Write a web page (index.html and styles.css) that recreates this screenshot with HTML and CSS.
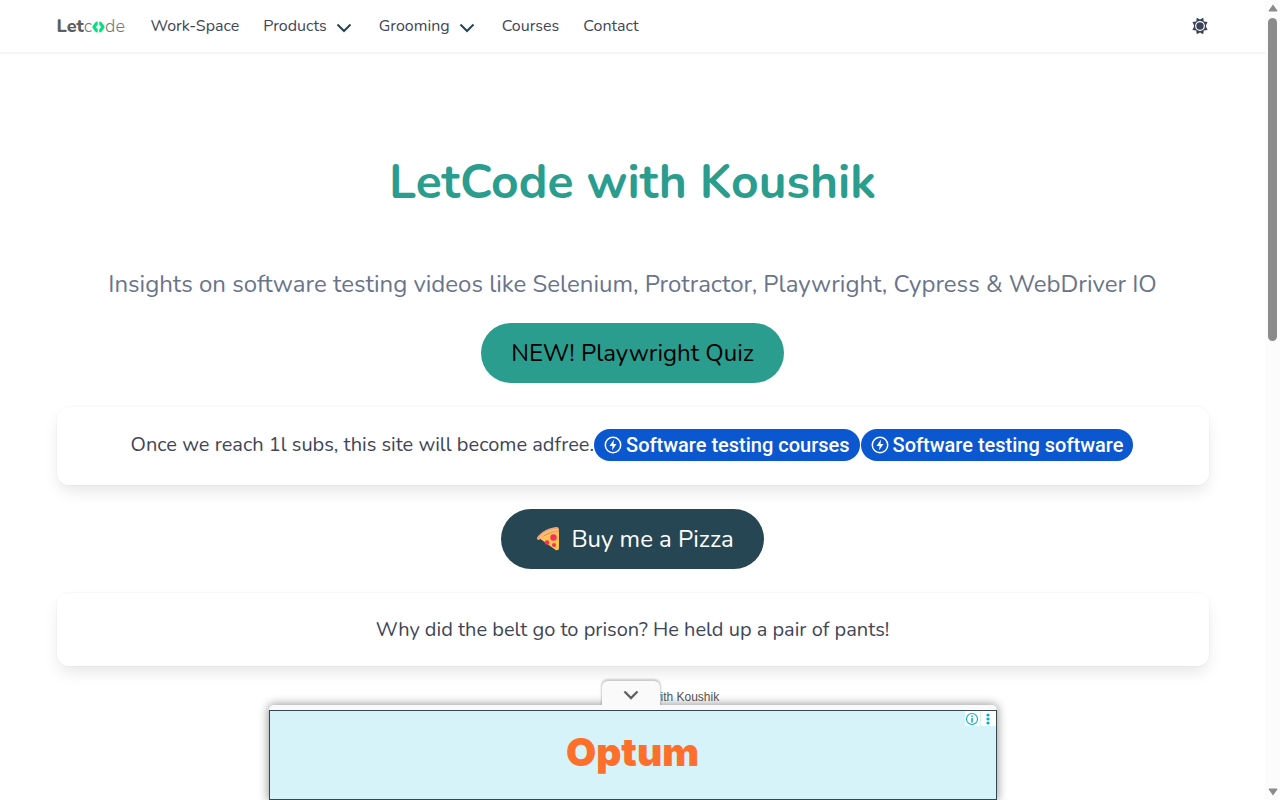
FILE: index.html
```html
<!DOCTYPE html>
<html lang="en">
<head>
<meta charset="utf-8">
<title>LetCode with Koushik</title>
<link rel="stylesheet" href="styles.css">
</head>
<body>
<div class="page">
  <header class="navbar">
    <nav class="navbar-inner" aria-label="Main">
      <a class="logo" href="#" aria-label="Letcode"><b>Let</b>c<svg width="13" height="12" viewBox="0 0 13 12" aria-hidden="true"><path d="M5.800.5v3L4 6l1.800 2.500v3C3.500 11.500 2 9.500.2 6 2 2.500 3.500.5 5.800.5zM7.200.5v3L9 6 7.200 8.500v3c2.300 0 3.800-2 5.600-5.500C11 2.500 9.500.5 7.200.5z" fill="#08df82"/></svg>de</a>
      <a class="nav-link" href="#">Work-Space</a>
      <a class="nav-link" href="#">Products<svg class="chevron" viewBox="0 0 16 10" aria-hidden="true"><path d="M1.500 1.500 8 8l6.500-6.500"/></svg></a>
      <a class="nav-link" href="#">Grooming<svg class="chevron" viewBox="0 0 16 10" aria-hidden="true"><path d="M1.500 1.500 8 8l6.500-6.500"/></svg></a>
      <a class="nav-link" href="#">Courses</a>
      <a class="nav-link" href="#">Contact</a>
      <button class="theme" type="button" aria-label="Toggle theme"><svg width="18" height="18" viewBox="0 0 18 18" aria-hidden="true"><path d="M9 2.500 12.200.800l.6 3.600 3.800.5L15 8.200V9.800l1.600 3.300-3.800.5-.6 3.600L9 15.500l-3.200 1.700-.6-3.600-3.800-.5L3 9.800V8.200L1.400 4.900l3.800-.5.6-3.600z" fill="#3b4256"/><circle cx="9" cy="9" r="4.300" fill="#3b4256" stroke="#fff" stroke-width="1.200"/></svg></button>
    </nav>
  </header>
  <main class="content">
    <h1>LetCode with Koushik</h1>
    <p class="subtitle">Insights on software testing videos like Selenium, Protractor, Playwright, Cypress &amp; WebDriver IO</p>
    <a class="pill pill-quiz" href="#">NEW! Playwright Quiz</a>
    <section class="card card-ads">
      <span>Once we reach 1l subs, this site will become adfree.</span>
      <a class="chip" href="#"><svg viewBox="0 0 18 18" aria-hidden="true"><circle cx="9" cy="9" r="7.700" fill="none" stroke="#fff" stroke-width="1.500"/><path d="M10 3.500 5.500 10h3L8 14.500 12.500 8h-3z" fill="#fff"/></svg>Software testing courses</a>
      <a class="chip" href="#"><svg viewBox="0 0 18 18" aria-hidden="true"><circle cx="9" cy="9" r="7.700" fill="none" stroke="#fff" stroke-width="1.500"/><path d="M10 3.500 5.500 10h3L8 14.500 12.500 8h-3z" fill="#fff"/></svg>Software testing software</a>
    </section>
    <a class="pill pill-pizza" href="#"><svg width="24" height="26" viewBox="0 0 24 26" aria-hidden="true"><path d="M3 12 20 4.500Q23 4.500 23 7v15q0 3-3 2.200z" fill="#ffc44d"/><path d="M1 13C-.5 11 9 2 20 1q3-.3 3 3v2C14 6 8 9 3 14q-1 .3-2-1z" fill="#f2a56f"/><path d="M4 11.500C9 6 15 4 22 3.500" fill="none" stroke="#ffc08a" stroke-width="1.500"/><circle cx="17.500" cy="11.500" r="3.200" fill="#f92f60"/><circle cx="11" cy="16.500" r="2.300" fill="#f92f60"/><circle cx="18" cy="19" r="2" fill="#f92f60"/></svg>Buy me a Pizza</a>
    <section class="card">Why did the belt go to prison? He held up a pair of pants!</section>
    <p class="caption">with Koushik</p>
  </main>
</div>
<div class="scrollbar" aria-hidden="true">
  <svg width="10" height="8" viewBox="0 0 10 8"><path d="M5 .5 9.300 6.500Q9.500 7.500 8.500 7.500h-7Q.5 7.500.7 6.500z"/></svg>
  <div class="track"><div class="thumb"></div></div>
  <svg width="10" height="8" viewBox="0 0 10 8"><path d="M5 7.500.7 1.500Q.5.500 1.500.500h7q1 0 .8 1z"/></svg>
</div>
<aside class="anchor-ad">
  <button class="collapse" type="button" aria-label="Hide advertisement"><svg width="16" height="10" viewBox="0 0 16 10" aria-hidden="true"><path d="M1.500 1.500 8 8l6.500-6.500" fill="none" stroke="#616161" stroke-width="2.400"/></svg></button>
  <div class="ad-frame">
    <a class="banner" href="#">Optum</a>
    <div class="ad-options">
      <button type="button" aria-label="Ad information"><svg width="14" height="14" viewBox="0 0 14 14" aria-hidden="true"><circle cx="7" cy="7" r="5.500" fill="none" stroke="#00aecd" stroke-width="1.100"/><path d="M7 6v4.500M7 3.500V5" stroke="#00aecd" stroke-width="1.500"/></svg></button>
      <button type="button" aria-label="Ad options"><svg width="14" height="14" viewBox="0 0 14 14" fill="#00aecd" aria-hidden="true"><circle cx="7" cy="3" r="1.600"/><circle cx="7" cy="7" r="1.600"/><circle cx="7" cy="11" r="1.600"/></svg></button>
    </div>
  </div>
</aside>
</body>
</html>
```
FILE: styles.css
```css
* { box-sizing: border-box; }
body {
  margin: 0;
  height: 100vh;
  display: flex;
  overflow: hidden;
  background: #fff;
  color: #3f4657;
  font-family: Nunito, Lato, sans-serif;
}
a { color: inherit; text-decoration: none; }
button { padding: 0; border: 0; background: none; cursor: pointer; }
h1, p { margin: 0; }
.page { flex: 1; min-width: 0; }
.navbar { box-shadow: 0 2px 0 #f5f5f5; }
.navbar-inner {
  max-width: 1152px;
  height: 52px;
  margin: 0 auto;
  display: flex;
  align-items: center;
  gap: 24px;
  font-size: 16px;
}
.logo {
  display: flex;
  align-items: center;
  width: 70px;
  font-size: 18px;
  font-weight: 300;
  color: #777;
}
.logo b { font-weight: 800; color: #5c5f5e; }
.logo svg { margin-top: 2px; }
.nav-link { display: flex; align-items: center; gap: 9px; }
.chevron {
  width: 16px;
  height: 10px;
  margin-top: 3px;
  margin-right: 3px;
  fill: none;
  stroke: #264653;
  stroke-width: 2;
}
.theme { margin-left: auto; display: flex; }
.content {
  max-width: 1152px;
  margin: 0 auto;
  padding-top: 103px;
  display: flex;
  flex-direction: column;
  align-items: center;
  gap: 24px;
}
h1 {
  margin-bottom: 33px;
  font-size: 48px;
  line-height: 54px;
  font-weight: 700;
  color: #2a9d8f;
}
.subtitle {
  margin-bottom: -3px;
  font-size: 24px;
  line-height: 36px;
  color: #69748c;
  white-space: nowrap;
}
.pill {
  height: 60px;
  padding: 0 30px;
  border-radius: 30px;
  display: flex;
  align-items: center;
  gap: 11px;
  font-size: 24px;
}
.pill-quiz { background: #2a9d8f; color: #000; }
.pill-pizza { background: #264653; color: #fff; padding-left: 35px; }
.card {
  align-self: stretch;
  display: flex;
  justify-content: center;
  align-items: center;
  padding: 22px 24px 21px;
  border-radius: 12px;
  box-shadow: 0 8px 16px -2px rgba(10,10,10,.1), 0 0 0 1px rgba(10,10,10,.02);
  font-size: 20px;
  line-height: 30px;
}
.card-ads { padding: 22px 24px 24px; line-height: 32px; white-space: nowrap; }
.chip {
  display: flex;
  align-items: center;
  gap: 4px;
  margin-right: 1px;
  padding: 0 10px;
  height: 32px;
  border-radius: 16px;
  background: #0b57d0;
  color: #fff;
  font: 500 20px/32px Roboto, sans-serif;
}
.chip svg { width: 18px; height: 18px; }
.caption {
  padding-left: 106px;
  font: 12px/14px "Liberation Sans", sans-serif;
  color: #555;
}
.scrollbar {
  width: 15px;
  padding: 4px 0;
  display: flex;
  flex-direction: column;
  align-items: center;
  gap: 6px;
  background: #fcfcfc;
  fill: #8b8b8b;
}
.track { flex: 1; }
.thumb { width: 9px; height: 42.3%; border-radius: 5px; background: #8b8b8b; }
.anchor-ad {
  position: fixed;
  left: 0;
  right: 15px;
  bottom: 0;
  display: flex;
  flex-direction: column;
  align-items: center;
}
.collapse {
  position: relative;
  z-index: 1;
  width: 58px;
  height: 24px;
  padding-top: 4px;
  margin-right: 4px;
  border-radius: 6px 6px 0 0;
  background: #fafafa;
  box-shadow: 0 -1px 2px 1px rgba(0,0,0,.2);
  clip-path: inset(-4px -4px 0 -4px);
}
.ad-frame {
  position: relative;
  width: 728px;
  padding-top: 5px;
  border-radius: 5px 5px 0 0;
  background: #fafafa;
  box-shadow: 0 0 10px 1px rgba(0,0,0,.4);
}
.banner {
  height: 90px;
  display: flex;
  align-items: center;
  justify-content: center;
  padding-bottom: 8px;
  border: 1px solid #37474f;
  background: #d6f3f9;
  color: #ff6f2c;
  font: 900 39px/1 Inter, sans-serif;
}
.ad-options { position: absolute; top: 6px; right: 1px; display: flex; gap: 1px; }
.ad-options button { width: 15px; height: 15px; background: #fff; }
.ad-options svg { display: block; }
```
